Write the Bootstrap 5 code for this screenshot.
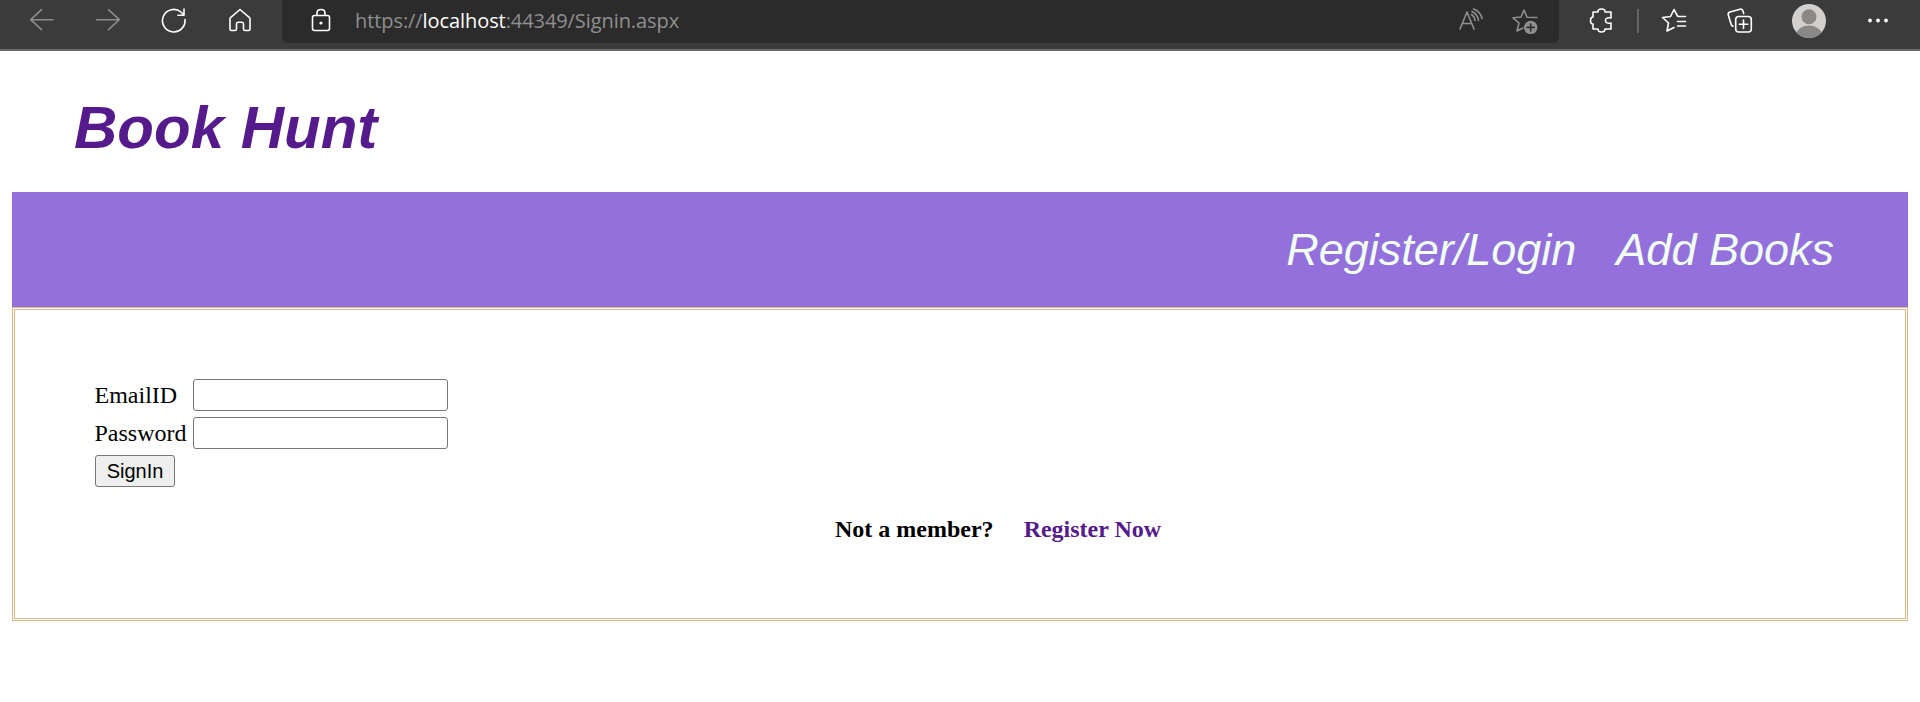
<!DOCTYPE html>
<html lang="en">
<head>
<meta charset="utf-8">
<title>Book Hunt</title>
<link href="https://cdn.jsdelivr.net/npm/bootstrap@5.3.0/dist/css/bootstrap.min.css" rel="stylesheet">
<style>
body{background:#fff;color:#000;font-family:"Liberation Serif",serif;font-size:24px;line-height:27px}
.browser{height:51px;background:#3b3b3b;border-bottom:2px solid #6b6b6b;color:#fff}
.browser svg{display:block;flex:none;fill:none;stroke:currentColor;stroke-width:1.6;stroke-linecap:round;stroke-linejoin:round}
.back-forward{color:#8c8c8c}
.address{width:1277px;height:43px;margin-left:26px;background:#2b2b2b;border-radius:0 0 6px 6px;color:#8f8f8f}
.url{font:20px/27px "Open Sans",sans-serif;letter-spacing:-.08px;margin:7px 0 0 20px;width:326px}
.divider{width:2px;height:24px;margin-top:9px;background:#666}
.page-body{margin:0 12px}
.brand{height:141px;padding:42px 0 0 62px}
.brand a{font:italic bold 60px/69px "Liberation Sans",sans-serif;color:#551a8b}
.menu{height:115px;background:mediumpurple;padding-right:74px;gap:40px;font:italic 45px/52px "Liberation Sans",sans-serif}
.menu a{color:#f0fff0}
.panel{height:314px;border:3px double burlywood;padding:69px 80px 0}
.field-row{height:32px;margin-bottom:6px}
.field-row label{width:98px;text-indent:-.5px}
.field{width:255px;height:32px;border:1px solid #767676;border-radius:3px;padding:2px 4px;font:20px "Liberation Sans",sans-serif}
.sign{width:80px;height:32px;border:1px solid #767676;border-radius:3px;background:#efefef;color:#000;padding:0;font:20px/28px "Liberation Sans",sans-serif}
.member{margin:29px 0 0 740px;gap:30px}
.member a{color:#551a8b}
</style>
</head>
<body>
<header class="browser d-flex align-items-start">
  <div class="back-forward d-flex">
    <svg width="60" height="40"><path d="M53 19.700H30.700M41.500 9.700L30.700 19.700L41.500 29.700"/></svg>
    <svg width="72" height="40"><path d="M36.500 19.700H59.300M48.500 9.700L59.300 19.700L48.500 29.700"/></svg>
  </div>
  <svg width="84" height="40"><path d="M53 19.500A11.300 11.300 0 1 1 49 12L52 15M52 9V15.300H46"/></svg>
  <svg width="40" height="40"><path d="M24 9.500L14.500 17.600Q14 18 14 19V29Q14 30.500 15.500 30.500H19Q20.500 30.500 20.500 29V24Q20.500 22.300 22 22.300H26Q27.500 22.300 27.500 24V29Q27.500 30.500 29 30.500H32.500Q34 30.500 34 29V19Q34 18 33.500 17.600Z"/></svg>
  <div class="address d-flex align-items-start">
    <svg class="text-white" width="53" height="40"><rect x="30.500" y="15.500" width="17" height="15" rx="2"/><path d="M35 15V13Q35 9.500 39 9.500T43 13V15"/><circle cx="39" cy="23" r="1.600" fill="currentColor" stroke="none"/></svg>
    <div class="url text-nowrap">https://<span class="text-white">localhost</span>:44349/Signin.aspx</div>
    <svg class="ms-auto" width="119" height="40"><path d="M20 29L27 12L34 29M22.500 23.500H31.500M31.500 14.500Q34.500 16.500 35 20.500M32 11.500Q37.500 14 38.500 20.500M33.500 9Q40.500 11.500 42 18.500"/><path d="M97 17.500L87 17.300L84 10L81 17L73 17.800L79 23L77 31L83 28"/><circle cx="90.700" cy="27.400" r="6.700" fill="currentColor" stroke="none"/><path d="M87.200 27.400H94.200M90.700 24V31" stroke="#2b2b2b"/></svg>
  </div>
  <svg width="78" height="40"><path d="M35 12H39Q38.500 9 42.500 9T46 12H52V18Q46.500 17 46.500 20.500T52 23V29H46Q46 32 42.500 32T39 29H34V24Q31.500 24 31.500 20.500T34 17V12Z"/></svg>
  <div class="divider"></div>
  <svg width="68" height="40"><path d="M39.500 16.500L38.500 16L35 9.500L31.500 16.500L23.500 17.500L29.500 23L28 31L35 27.500M39.500 16.500H46.500M38.500 21.500H46.500M38.500 26H46.500"/></svg>
  <svg width="67" height="40"><rect x="28.700" y="16.500" width="15.600" height="15.500" rx="3"/><path d="M36.500 20V28.500M32.300 24.200H40.800M36.700 13.500L36 11Q35.300 8.600 33 9.200L23 12Q20.700 12.600 21.300 15L24 24Q24.300 25.700 26 26.200"/></svg>
  <svg width="70" height="40"><clipPath id="face"><circle cx="35" cy="21" r="17"/></clipPath><g clip-path="url(#face)" stroke="none"><path fill="#d2d0ce" d="M17 3H53V39H17Z"/><circle cx="35" cy="16.700" r="7.500" fill="#8a8886"/><ellipse cx="35" cy="37" rx="13.500" ry="11.500" fill="#8a8886"/></g></svg>
  <svg width="50" height="40"><g fill="currentColor" stroke="none"><circle cx="26" cy="20.500" r="1.900"/><circle cx="34" cy="20.500" r="1.900"/><circle cx="42" cy="20.500" r="1.900"/></g></svg>
</header>
<main class="page-body">
  <div class="brand"><a href="#" class="text-decoration-none">Book Hunt</a></div>
  <nav class="menu d-flex align-items-center justify-content-end">
    <a href="#" class="text-decoration-none">Register/Login</a>
    <a href="#" class="text-decoration-none">Add Books</a>
  </nav>
  <section class="panel">
    <form>
      <div class="field-row d-flex align-items-center"><label for="email">EmailID</label><input class="field" id="email" type="text"></div>
      <div class="field-row d-flex align-items-center"><label for="password">Password</label><input class="field" id="password" type="password"></div>
      <button class="sign d-block" type="button">SignIn</button>
    </form>
    <div class="member d-flex fw-bold"><span>Not a member?</span><a href="#" class="text-decoration-none">Register Now</a></div>
  </section>
</main>
<script src="https://cdn.jsdelivr.net/npm/bootstrap@5.3.0/dist/js/bootstrap.bundle.min.js"></script>
</body>
</html>
